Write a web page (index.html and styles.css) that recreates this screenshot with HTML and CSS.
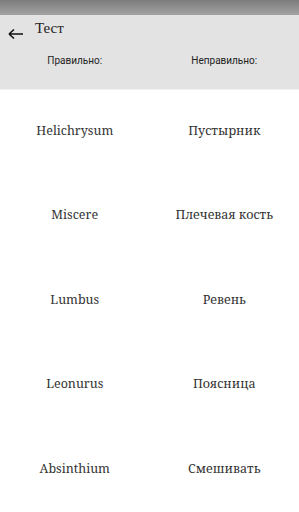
FILE: index.html
```html
<!DOCTYPE html>
<html lang="ru">
<head>
    <meta charset="UTF-8">
    <meta name="viewport" content="width=device-width, initial-scale=1.0">
    <title>Тест</title>
    <link rel="stylesheet" href="styles.css">
</head>
<body>
    <div class="status-bar"></div>
    <header>
        <div class="title-row">
            <svg class="back" width="16" height="12" viewBox="0 0 16 12">
                <path d="M1 6 H15 M1 6 L6 1.5 M1 6 L6 10.5" stroke="#111" stroke-width="1.6" fill="none"/>
            </svg>
            <h1>Тест</h1>
        </div>
        <div class="labels">
            <span>Правильно:</span>
            <span>Неправильно:</span>
        </div>
    </header>
    <main class="pairs">
        <div>Helichrysum</div><div>Пустырник</div>
        <div>Miscere</div><div>Плечевая кость</div>
        <div>Lumbus</div><div>Ревень</div>
        <div>Leonurus</div><div>Поясница</div>
        <div>Absinthium</div><div>Смешивать</div>
    </main>
</body>
</html>
```
FILE: styles.css
```css
body {
    margin: 0;
    padding: 0;
    background: #fff;
    font-family: "Noto Serif", "DejaVu Serif", "Liberation Serif", serif;
    color: #333;
    overflow: hidden;
}
.status-bar {
    height: 15px;
    background: linear-gradient(#7c7c7c, #a3a3a3);
}
header {
    background: #e3e3e3;
    height: 74px;
    border-bottom: 1px solid #f0f0f0;
}
.title-row {
    display: flex;
    align-items: center;
    height: 35px;
    padding-left: 8px;
}
.back {
    margin-top: 3px;
}
h1 {
    font-family: "Liberation Serif", serif;
    font-weight: normal;
    font-size: 15px;
    color: #222;
    margin: -8px 0 0 11px;
}
.labels {
    display: grid;
    grid-template-columns: 1fr 1fr;
    padding-top: 5px;
    font-family: Roboto, "Noto Sans", sans-serif;
    font-size: 10px;
    color: #222;
}
.labels span {
    text-align: center;
}
.pairs {
    display: grid;
    grid-template-columns: 1fr 1fr;
    grid-auto-rows: 84.5px;
    margin-top: -2px;
    font-size: 12.5px;
}
.pairs div {
    display: flex;
    align-items: center;
    justify-content: center;
}
```
